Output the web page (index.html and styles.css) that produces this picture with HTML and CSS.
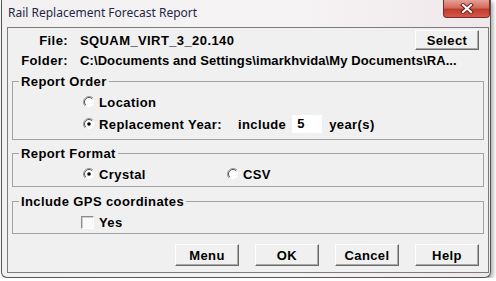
FILE: index.html
```html
<!DOCTYPE html>
<html lang="en">
<head>
  <meta charset="UTF-8">
  <title>Rail Replacement Forecast Report</title>
  <link rel="stylesheet" href="styles.css">
</head>
<body>
  <div class="window">
    <div class="titlebar">
      <span class="title">Rail Replacement Forecast Report</span>
      <span class="close">
        <svg width="14" height="11" viewBox="0 0 14 11">
          <path d="M3 2 L11 9 M11 2 L3 9" stroke="#6b2620" stroke-width="4" stroke-linecap="square"/>
          <path d="M3 2 L11 9 M11 2 L3 9" stroke="#fff" stroke-width="2" stroke-linecap="square"/>
        </svg>
      </span>
    </div>

    <div class="client">
      <!-- fichier et dossier -->
      <div class="source">
        <span class="label">File:</span>
        <span class="value">SQUAM_VIRT_3_20.140</span>
        <button class="btn">Select</button>
        <span class="label">Folder:</span>
        <span class="value folder">C:\Documents and Settings\imarkhvida\My Documents\RA...</span>
      </div>

      <fieldset class="group group-order">
        <legend>Report Order</legend>
        <div class="option">
          <svg class="radio" viewBox="0 0 12 12">
            <circle cx="6" cy="6" r="5" fill="#fff"/>
            <path d="M10 2 A5.66 5.66 0 0 0 2 10" stroke="#9a9a9a" fill="none"/>
            <path d="M9.2 2.8 A4.5 4.5 0 0 0 2.8 9.2" stroke="#555" fill="none"/>
          </svg>
          <span>Location</span>
        </div>
        <div class="option">
          <svg class="radio" viewBox="0 0 12 12">
            <circle cx="6" cy="6" r="5" fill="#fff"/>
            <path d="M10 2 A5.66 5.66 0 0 0 2 10" stroke="#9a9a9a" fill="none"/>
            <path d="M9.2 2.8 A4.5 4.5 0 0 0 2.8 9.2" stroke="#555" fill="none"/>
            <circle cx="6" cy="6" r="1.8" fill="#000"/>
          </svg>
          <span>Replacement Year:</span>
          <span class="include">include</span>
          <span class="field">5</span>
          <span class="unit">year(s)</span>
        </div>
      </fieldset>

      <fieldset class="group group-format">
        <legend>Report Format</legend>
        <div class="choices">
          <div class="option option-wide">
            <svg class="radio" viewBox="0 0 12 12">
              <circle cx="6" cy="6" r="5" fill="#fff"/>
              <path d="M10 2 A5.66 5.66 0 0 0 2 10" stroke="#9a9a9a" fill="none"/>
              <path d="M9.2 2.8 A4.5 4.5 0 0 0 2.8 9.2" stroke="#555" fill="none"/>
              <circle cx="6" cy="6" r="1.8" fill="#000"/>
            </svg>
            <span>Crystal</span>
          </div>
          <div class="option">
            <svg class="radio" viewBox="0 0 12 12">
              <circle cx="6" cy="6" r="5" fill="#fff"/>
              <path d="M10 2 A5.66 5.66 0 0 0 2 10" stroke="#9a9a9a" fill="none"/>
              <path d="M9.2 2.8 A4.5 4.5 0 0 0 2.8 9.2" stroke="#555" fill="none"/>
            </svg>
            <span>CSV</span>
          </div>
        </div>
      </fieldset>

      <fieldset class="group group-gps">
        <legend>Include GPS coordinates</legend>
        <div class="option">
          <span class="checkbox"></span>
          <span>Yes</span>
        </div>
      </fieldset>

      <div class="actions">
        <button class="btn">Menu</button>
        <button class="btn">OK</button>
        <button class="btn">Cancel</button>
        <button class="btn">Help</button>
      </div>
    </div>
  </div>
</body>
</html>
```

FILE: styles.css
```css
/* page */
body {
  margin: 0;
  background: #fff;
  font-family: "Liberation Sans", Arial, sans-serif;
}

/* cadre de la fenetre */
.window {
  width: 488px;
  height: 277px;
  margin-left: 1px;
  border: 1px solid #555;
  border-top: 0;
  border-radius: 0 0 6px 6px;
  background: linear-gradient(90deg, #f2f0f1, #f6f3f4 60%, #efe8ea);
  box-shadow: 2px 2px 4px rgba(0, 0, 0, 0.35);
  display: flex;
  flex-direction: column;
}

.titlebar {
  height: 27px;
  display: flex;
  align-items: flex-start;
  padding-left: 6px;
}

.title {
  font-family: "Noto Sans", sans-serif;
  font-size: 12px;
  line-height: 16px;
  padding-top: 5px;
  color: #1d2846;
}

.close {
  margin-left: auto;
  width: 47px;
  height: 18px;
  border: 1px solid #7a2a22;
  border-top: 0;
  border-radius: 0 0 4px 4px;
  box-sizing: border-box;
  background: linear-gradient(#e6a196, #d36b5c 45%, #c23c2b 55%, #d2584a);
  display: flex;
  align-items: center;
  justify-content: center;
}

/* zone client */
.client {
  flex: 1;
  margin: 0 1px 4px 5px;
  border: 1px solid #7c7c7c;
  background: #f0f0f0;
  padding-top: 2px;
  font-size: 13px;
  font-weight: bold;
  letter-spacing: 0.4px;
  line-height: 15px;
  color: #000;
}

.source {
  display: grid;
  grid-template-columns: 60px 1fr 64px;
  grid-auto-rows: 20px;
  column-gap: 12px;
  align-items: center;
  padding-right: 9px;
}

.label {
  text-align: right;
}

.value {
  white-space: nowrap;
}

.folder {
  grid-column: 2 / 4;
  letter-spacing: 0.1px;
}

/* boutons */
.btn {
  font: inherit;
  letter-spacing: inherit;
  color: #000;
  width: 64px;
  height: 22px;
  padding: 0;
  background: #f0f0f0;
  border: 1px solid;
  border-color: #fff #6a6a6a #6a6a6a #fff;
  box-shadow: inset -1px -1px #a8a8a8;
}

.source .btn {
  height: 20px;
}

/* groupes */
.group {
  margin: 6px 4px 0;
  padding: 2px 6px 2px;
  border: 1px solid #a3a3a3;
  min-width: 0;
}

.group legend {
  padding: 0 2px;
}

.group-order {
  margin-top: 4px;
  padding-bottom: 4px;
}

.group-format {
  padding-bottom: 1px;
}

.group-gps {
  margin-top: 7px;
  padding-bottom: 0;
}

.option {
  height: 22px;
  display: flex;
  align-items: center;
  margin-left: 64px;
}

.choices {
  display: flex;
  margin-left: 64px;
}

.choices .option {
  margin-left: 0;
}

.option-wide {
  width: 144px;
}

.radio {
  width: 12px;
  height: 12px;
  margin-right: 4px;
}

.checkbox {
  width: 11px;
  height: 11px;
  margin-left: -2px;
  margin-right: 5px;
  background: #fafafa;
  border: 1px solid;
  border-color: #8a8a8a #fff #fff #8a8a8a;
  box-shadow: inset 1px 1px #d0d0d0;
}

.include {
  margin-left: 16px;
}

.field {
  width: 25px;
  height: 18px;
  line-height: 18px;
  padding-left: 5px;
  margin-left: 6px;
  background: #fff;
}

.unit {
  margin-left: 7px;
}

.actions {
  display: flex;
  justify-content: flex-end;
  gap: 16px;
  margin-top: 10px;
  padding-right: 9px;
}
```
